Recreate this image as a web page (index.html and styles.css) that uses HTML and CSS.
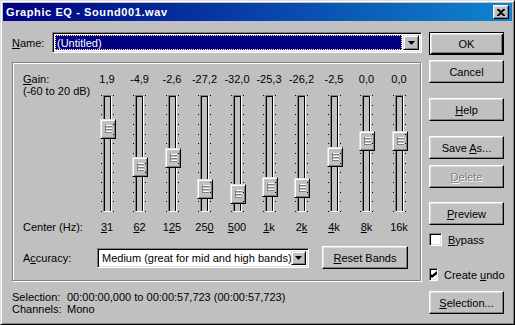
FILE: index.html
```html
<!DOCTYPE html>
<html lang="en">
<head>
    <meta charset="UTF-8">
    <title>Graphic EQ</title>
    <link rel="stylesheet" href="styles.css">
</head>
<body>
    <div class="window">
        <div class="titlebar">
            <span class="title">Graphic EQ - Sound001.wav</span>
            <div class="close">
                <svg width="8" height="7" viewBox="0 0 8 7"><path d="M0 0h2l2 2 2-2h2v1L5 3.5 8 6v1H6L4 5 2 7H0V6l3-2.5L0 1z" fill="#000"/></svg>
            </div>
        </div>

        <div class="content">
            <div class="main">
                <div class="name-row">
                    <span class="name-label"><u>N</u>ame:</span>
                    <div class="combo">
                        <div class="combo-field selected"><span>(Untitled)</span></div>
                        <div class="drop-btn">
                            <svg width="7" height="4" viewBox="0 0 7 4"><path d="M0 0h7L3.5 4z" fill="#000"/></svg>
                        </div>
                    </div>
                </div>

                <div class="group">
                    <div class="eq" id="eq">
                        <div class="gain-label"><u>G</u>ain:<br>(-60 to 20 dB)</div>
                        <div class="hz-label">Center (Hz):</div>
                    </div>

                    <div class="acc-row">
                        <span class="acc-label">A<u>c</u>curacy:</span>
                        <div class="combo acc-combo">
                            <div class="combo-field"><span>Medium (great for mid and high bands)</span></div>
                            <div class="drop-btn">
                                <svg width="7" height="4" viewBox="0 0 7 4"><path d="M0 0h7L3.5 4z" fill="#000"/></svg>
                            </div>
                        </div>
                        <div class="btn reset-btn"><span><u>R</u>eset Bands</span></div>
                    </div>
                </div>

                <div class="status">
                    <span>Selection:</span><span>00:00:00,000 to 00:00:57,723 (00:00:57,723)</span>
                    <span>Channels:</span><span>Mono</span>
                </div>
            </div>

            <div class="side">
                <div class="btn default"><span>OK</span></div>
                <div class="btn cancel-btn"><span>Cancel</span></div>
                <div class="btn help-btn"><span><u>H</u>elp</span></div>
                <div class="btn save-btn"><span>Save <u>A</u>s...</span></div>
                <div class="btn delete-btn disabled"><span><u>D</u>elete</span></div>
                <div class="btn preview-btn"><span><u>P</u>review</span></div>
                <div class="check-row bypass">
                    <span class="checkbox"></span>
                    <span><u>B</u>ypass</span>
                </div>
                <div class="check-row undo">
                    <span class="checkbox">
                        <svg width="7" height="7" viewBox="0 0 7 7"><path d="M0 2l2 2 5-4v3L2 7 0 5z" fill="#000"/></svg>
                    </span>
                    <span>Create <u>u</u>ndo</span>
                </div>
                <div class="btn selection-btn"><span><u>S</u>election...</span></div>
            </div>
        </div>
    </div>

    <script>
        // gain text, center freq, underlined char index, thumb offset
        const bands = [
            ['1,9', '31', 0, 24],
            ['-4,9', '62', 0, 62],
            ['-2,6', '125', 1, 53],
            ['-27,2', '250', 2, 84],
            ['-32,0', '500', 0, 89],
            ['-25,3', '1k', 0, 82],
            ['-26,2', '2k', 1, 83],
            ['-2,5', '4k', 0, 52],
            ['0,0', '8k', 0, 36],
            ['0,0', '16k', -1, 36]
        ];

        const eq = document.getElementById("eq");

        bands.forEach(b => {
            const val = document.createElement("div");
            val.className = "val";
            val.innerText = b[0];
            eq.appendChild(val);
        });

        bands.forEach(b => {
            const cell = document.createElement("div");
            cell.className = "track-cell";
            cell.innerHTML = '<div class="slider"><div class="track"></div>' +
                '<div class="thumb" style="top:' + b[3] + 'px"><div class="grip"></div></div></div>';
            eq.appendChild(cell);
        });

        bands.forEach(b => {
            const hz = document.createElement("div");
            hz.className = "hz";
            const t = b[1], k = b[2];
            hz.innerHTML = k < 0 ? t : t.slice(0, k) + '<u>' + t[k] + '</u>' + t.slice(k + 1);
            eq.appendChild(hz);
        });
    </script>
</body>
</html>
```

FILE: styles.css
```css
* {
    box-sizing: border-box;
}

body {
    margin: 0;
    font-family: "Liberation Sans", Arial, sans-serif;
    font-size: 11px;
    color: #000;
}

u {
    text-underline-offset: 1px;
}

.window {
    width: 515px;
    height: 325px;
    background-color: #c0c0c0;
    border: 1px solid;
    border-color: #dfdfdf #000 #000 #dfdfdf;
    box-shadow: inset 1px 1px #fff, inset -1px -1px #808080;
    padding: 2px;
}

.titlebar {
    height: 18px;
    display: flex;
    align-items: center;
    justify-content: space-between;
    padding: 0 3px 0 3px;
    background: linear-gradient(to right, #000080, #1084d0);
    color: #fff;
}

.title {
    font-weight: bold;
    letter-spacing: 0.6px;
}

.close {
    width: 16px;
    height: 14px;
    display: flex;
    align-items: center;
    justify-content: center;
    background-color: #c0c0c0;
    border: 1px solid;
    border-color: #fff #000 #000 #fff;
    box-shadow: inset -1px -1px #808080, inset 1px 1px #dfdfdf;
}

.content {
    display: flex;
    gap: 7px;
    padding: 11px 8px 0 9px;
}

.main {
    width: 410px;
}

.name-row {
    display: flex;
    align-items: center;
    height: 21px;
}

.name-label {
    width: 40px;
}

.combo {
    width: 370px;
    height: 21px;
    display: flex;
    padding: 2px;
    background-color: #fff;
    border: 1px solid;
    border-color: #808080 #fff #fff #808080;
    box-shadow: inset 1px 1px #000, inset -1px -1px #dfdfdf;
}

.combo-field {
    flex: 1;
    display: flex;
    align-items: center;
    padding-left: 2px;
    white-space: nowrap;
    overflow: hidden;
}

.combo-field.selected {
    background-color: #000080;
    color: #fff;
    border: 1px dotted #ffffc0;
    padding-left: 1px;
    margin-right: 1px;
}

.drop-btn {
    width: 16px;
    height: 100%;
    display: flex;
    align-items: center;
    justify-content: center;
    background-color: #c0c0c0;
    border: 1px solid;
    border-color: #dfdfdf #000 #000 #dfdfdf;
    box-shadow: inset 1px 1px #fff, inset -1px -1px #808080;
}

.group {
    margin-top: 9px;
    width: 409px;
    height: 219px;
    border: 1px solid #808080;
    box-shadow: inset 1px 1px #fff, 1px 1px #fff;
    padding: 10px 5px 0 10px;
}

.eq {
    display: grid;
    grid-template-columns: 68px 32px 33px 32px 33px 32px 32px 33px 32px 33px 32px;
    line-height: 12px;
}

.gain-label {
    grid-column: 1;
    grid-row: 1 / 3;
}

.hz-label {
    grid-column: 1;
    grid-row: 3;
    margin-top: 9px;
}

.val {
    grid-row: 1;
    text-align: center;
}

.track-cell {
    grid-row: 2;
    margin-top: 10px;
    height: 117px;
}

.hz {
    grid-row: 3;
    margin-top: 9px;
    text-align: center;
}

.slider {
    position: relative;
    width: 16px;
    height: 117px;
    margin-left: 9px;
}

.slider::before,
.slider::after {
    content: "";
    position: absolute;
    top: 0;
    width: 1px;
    height: 117px;
    background: repeating-linear-gradient(to bottom, #000 0 1px, transparent 1px 9.667px);
}

.slider::before {
    left: 1px;
}

.slider::after {
    left: 13px;
}

.track {
    position: absolute;
    left: 3px;
    top: 0;
    width: 9px;
    height: 117px;
    border: 1px solid;
    border-color: #808080 #fff #fff #808080;
    box-shadow: inset 1px 1px #000, inset -1px 0 #000;
}

.thumb {
    position: absolute;
    left: 0;
    width: 16px;
    height: 20px;
    background-color: #c0c0c0;
    border: 1px solid;
    border-color: #dfdfdf #000 #000 #dfdfdf;
    box-shadow: inset 1px 1px #fff, inset -1px -1px #808080;
    display: flex;
    align-items: center;
    justify-content: center;
}

.grip {
    width: 7px;
    height: 8px;
    border-left: 1px solid #808080;
    background: repeating-linear-gradient(to bottom, #fff 0 1px, #808080 1px 2px, transparent 2px 3px);
}

.acc-row {
    display: flex;
    align-items: center;
    margin-top: 13px;
    height: 23px;
}

.acc-label {
    width: 74px;
}

.acc-combo {
    width: 212px;
    height: 20px;
}

.acc-combo .drop-btn {
    width: 15px;
}

.btn {
    width: 75px;
    height: 23px;
    display: flex;
    align-items: center;
    justify-content: center;
    white-space: nowrap;
    background-color: #c0c0c0;
    border: 1px solid;
    border-color: #fff #000 #000 #fff;
    box-shadow: inset -1px -1px #808080, inset 1px 1px #dfdfdf;
}

.btn.default {
    border-color: #000;
    box-shadow: inset 1px 1px #fff, inset -1px -1px #000, inset 2px 2px #dfdfdf, inset -2px -2px #808080;
}

.btn.disabled {
    color: #808080;
    text-shadow: 1px 1px #fff;
}

.reset-btn {
    width: 86px;
    margin-left: 13px;
}

.status {
    margin-top: 10px;
    display: grid;
    grid-template-columns: 55px auto;
    line-height: 12px;
}

.side {
    width: 75px;
    display: flex;
    flex-direction: column;
}

.cancel-btn {
    margin-top: 5px;
}

.help-btn,
.save-btn {
    margin-top: 15px;
}

.delete-btn {
    margin-top: 6px;
}

.preview-btn {
    margin-top: 14px;
}

.check-row {
    display: flex;
    align-items: center;
    gap: 6px;
    height: 13px;
    white-space: nowrap;
}

.bypass {
    margin-top: 8px;
}

.undo {
    margin-top: 22px;
}

.checkbox {
    width: 13px;
    height: 13px;
    display: flex;
    align-items: center;
    justify-content: center;
    background-color: #fff;
    border: 1px solid;
    border-color: #808080 #fff #fff #808080;
    box-shadow: inset 1px 1px #000, inset -1px -1px #dfdfdf;
}

.selection-btn {
    margin-top: 10px;
}
```
